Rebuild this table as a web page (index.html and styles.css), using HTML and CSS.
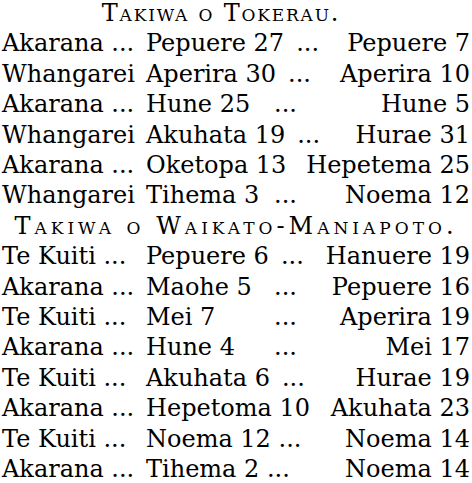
FILE: index.html
```html
<!DOCTYPE html>
<html>
<head>
<meta charset="utf-8">
<link rel="stylesheet" href="styles.css">
</head>
<body>
<div class="table">
  <div class="head head-north">Takiwa o Tokerau.</div>
  <div class="row"><span>Akarana ...</span><span>Pepuere 27</span><span class="dots">...</span><span class="end">Pepuere 7</span></div>
  <div class="row"><span>Whangarei</span><span>Aperira 30</span><span class="dots">...</span><span class="end">Aperira 10</span></div>
  <div class="row"><span>Akarana ...</span><span>Hune 25</span><span class="dots">...</span><span class="end">Hune 5</span></div>
  <div class="row"><span>Whangarei</span><span>Akuhata 19</span><span class="dots">...</span><span class="end">Hurae 31</span></div>
  <div class="row"><span>Akarana ...</span><span>Oketopa 13</span><span class="dots"></span><span class="end">Hepetema 25</span></div>
  <div class="row"><span>Whangarei</span><span>Tihema 3</span><span class="dots">...</span><span class="end">Noema 12</span></div>
  <div class="head head-waikato">Takiwa o Waikato-Maniapoto.</div>
  <div class="row"><span>Te Kuiti ...</span><span>Pepuere 6</span><span class="dots">...</span><span class="end">Hanuere 19</span></div>
  <div class="row"><span>Akarana ...</span><span>Maohe 5</span><span class="dots">...</span><span class="end">Pepuere 16</span></div>
  <div class="row"><span>Te Kuiti ...</span><span>Mei 7</span><span class="dots">...</span><span class="end">Aperira 19</span></div>
  <div class="row"><span>Akarana ...</span><span>Hune 4</span><span class="dots">...</span><span class="end">Mei 17</span></div>
  <div class="row"><span>Te Kuiti ...</span><span>Akuhata 6</span><span class="dots">...</span><span class="end">Hurae 19</span></div>
  <div class="row"><span>Akarana ...</span><span>Hepetoma 10</span><span class="dots"></span><span class="end">Akuhata 23</span></div>
  <div class="row"><span>Te Kuiti ...</span><span>Noema 12 ...</span><span class="dots"></span><span class="end">Noema 14</span></div>
  <div class="row"><span>Akarana ...</span><span>Tihema 2 ...</span><span class="dots"></span><span class="end">Noema 14</span></div>
</div>
</body>
</html>
```
FILE: styles.css
```css
html, body {
  margin: 0;
  padding: 0;
  background: #fff;
}
.table {
  width: 472px;
  margin-top: -2px;
  padding: 0 2px;
  box-sizing: border-box;
  font-family: "DejaVu Serif", serif;
  font-size: 24px;
  line-height: 30.4px;
  color: #000;
}
.head {
  text-align: center;
  font-variant: small-caps;
  letter-spacing: 1.8px;
}
.head-north {
  padding-right: 30px;
}
.head-waikato {
  letter-spacing: 4px;
}
.row {
  display: grid;
  grid-template-columns: 144px minmax(116px, max-content) 1fr max-content;
  white-space: nowrap;
}
.dots {
  padding-left: 12px;
}
.end {
  text-align: right;
}
```
